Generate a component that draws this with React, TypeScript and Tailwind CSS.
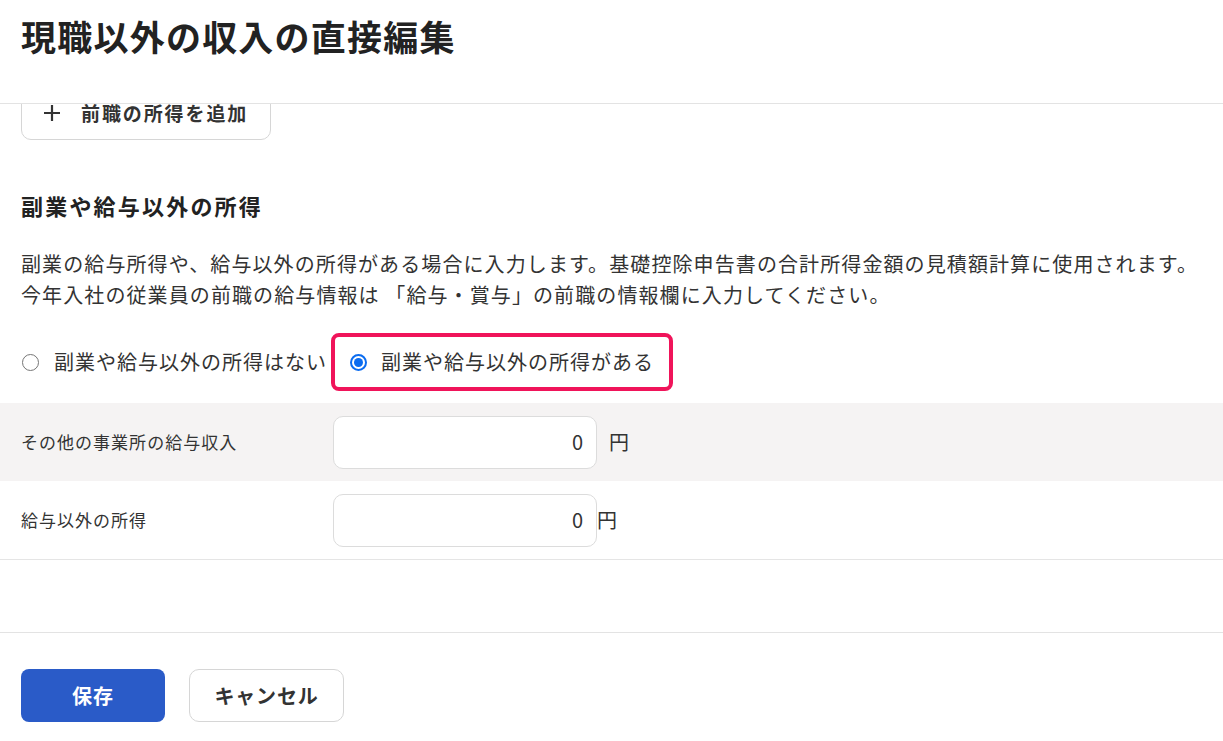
import React, { useState } from "react";

function Radio({ checked }: { checked: boolean }) {
  return checked ? (
    <span className="w-[17px] h-[17px] rounded-full border-[2px] border-[#0b6cf0] flex items-center justify-center shrink-0">
      <span className="w-[9px] h-[9px] rounded-full bg-[#0b6cf0]" />
    </span>
  ) : (
    <span className="w-[17px] h-[17px] rounded-full border-[1.5px] border-[#767676] bg-white shrink-0" />
  );
}

function AmountRow({
  label,
  value,
  shaded,
  tight,
}: {
  label: string;
  value: string;
  shaded?: boolean;
  tight?: boolean;
}) {
  return (
    <div
      className={`flex items-center px-[21px] ${
        shaded ? "h-[78px] bg-[#f5f3f3]" : "h-[79px] bg-white border-b border-[#e5e5e5]"
      }`}
    >
      <div className="w-[312px] text-[17px] tracking-[0.06em] text-[#333]">{label}</div>
      <div className="w-[264px] h-[53px] rounded-[10px] border border-[#dcdcdc] bg-white flex items-center justify-end pr-[13px] text-[20px] text-[#333]">
        {value}
      </div>
      <span className={`text-[20px] text-[#333] ${tight ? "ml-0" : "ml-[12px]"}`}>円</span>
    </div>
  );
}

export default function App() {
  const [hasOther, setHasOther] = useState(true);

  return (
    <div className="w-[1223px] h-[741px] bg-white flex flex-col overflow-hidden font-['Noto_Sans_CJK_JP','Noto_Sans',sans-serif] text-[#333]">
      {/* Header */}
      <div className="h-[104px] shrink-0 border-b border-[#e3e3e3] px-[21px] pt-[11px]">
        <h1 className="text-[35px] leading-[50px] font-bold text-[#222] tracking-[0.035em]">
          現職以外の収入の直接編集
        </h1>
      </div>

      {/* Body */}
      <div className="flex-1 overflow-hidden">
        <div className="-mt-[18px]">
          <div className="px-[21px]">
            <button className="h-[54px] w-[250px] rounded-[10px] border border-[#d6d6d6] bg-white flex items-center pl-[21px] gap-[20px]">
              <svg width="18" height="18" viewBox="0 0 18 18" fill="none">
                <path d="M9 1v16M1 9h16" stroke="#333" strokeWidth="2.2" />
              </svg>
              <span className="text-[19px] leading-[18px] font-semibold tracking-[0.1em] text-[#333]">
                前職の所得を追加
              </span>
            </button>

            <h2 className="mt-[49px] text-[22px] leading-[32px] font-bold tracking-[0.1em] text-[#222]">
              副業や給与以外の所得
            </h2>

            <p className="mt-[27px] text-[20px] leading-[31px] tracking-[0.055em] whitespace-nowrap text-[#333]">
              副業の給与所得や、給与以外の所得がある場合に入力します。基礎控除申告書の合計所得金額の見積額計算に使用されます。
              <br />
              今年入社の従業員の前職の給与情報は 「給与・賞与」の前職の情報欄に入力してください。
            </p>

            <div className="mt-[23px] flex items-center">
              <label
                className="flex items-center gap-[15px] pl-px cursor-pointer"
                onClick={() => setHasOther(false)}
              >
                <Radio checked={!hasOther} />
                <span className="text-[20px] tracking-[0.05em] text-[#333]">副業や給与以外の所得はない</span>
              </label>
              <label
                className="ml-[4px] h-[58px] border-[4px] border-[#f0145a] rounded-[8px] flex items-center pl-[15px] pr-[15px] gap-[14px] cursor-pointer"
                onClick={() => setHasOther(true)}
              >
                <Radio checked={hasOther} />
                <span className="text-[20px] tracking-[0.05em] text-[#333]">副業や給与以外の所得がある</span>
              </label>
            </div>
          </div>

          <div className="mt-[12px]">
            <AmountRow label="その他の事業所の給与収入" value="0" shaded />
            <AmountRow label="給与以外の所得" value="0" tight />
          </div>
        </div>
      </div>

      {/* Footer */}
      <div className="h-[109px] shrink-0 border-t border-[#e3e3e3] px-[21px] pt-[36px] flex items-start">
        <button className="w-[144px] h-[53px] rounded-[8px] bg-[#2a5bc8] text-white text-[20px] font-bold tracking-[0.05em]">
          保存
        </button>
        <button className="ml-[24px] w-[155px] h-[53px] rounded-[10px] border border-[#d6d6d6] bg-white text-[#333] text-[20px] font-bold tracking-[0.04em]">
          キャンセル
        </button>
      </div>
    </div>
  );
}
